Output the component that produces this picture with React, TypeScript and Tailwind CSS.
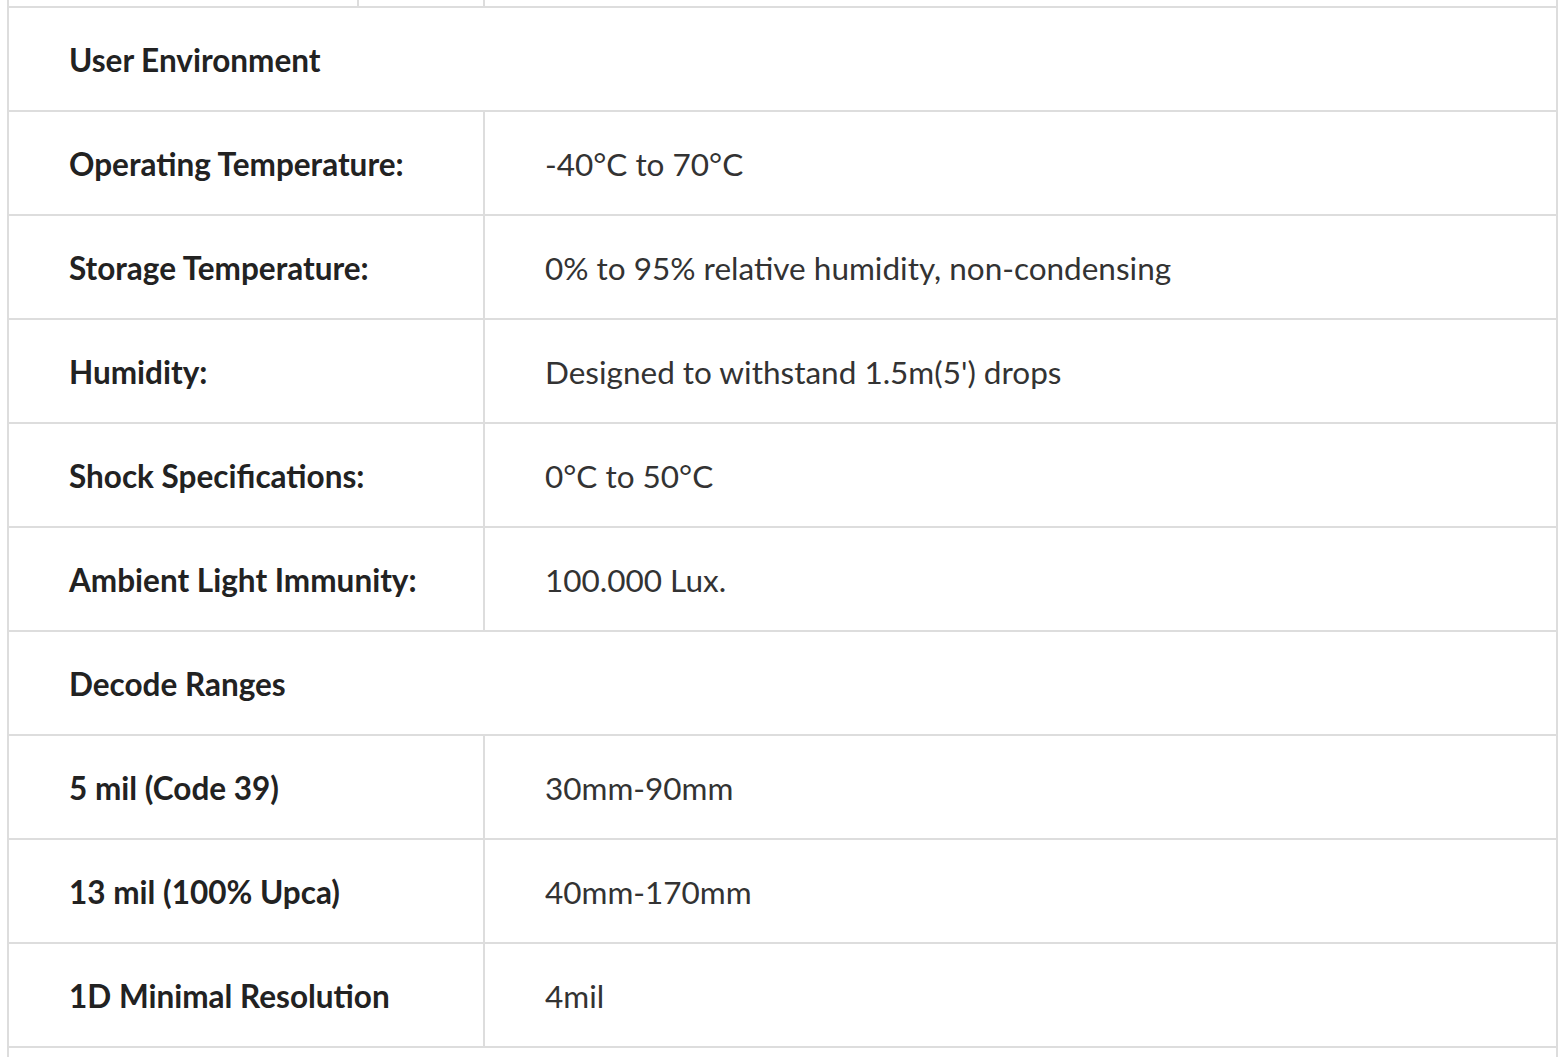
const rows: { label: string; value?: string }[] = [
  { label: 'User Environment' },
  { label: 'Operating Temperature:', value: '-40°C to 70°C' },
  { label: 'Storage Temperature:', value: '0% to 95% relative humidity, non-condensing' },
  { label: 'Humidity:', value: "Designed to withstand 1.5m(5') drops" },
  { label: 'Shock Specifications:', value: '0°C to 50°C' },
  { label: 'Ambient Light Immunity:', value: '100.000 Lux.' },
  { label: 'Decode Ranges' },
  { label: '5 mil (Code 39)', value: '30mm-90mm' },
  { label: '13 mil (100% Upca)', value: '40mm-170mm' },
  { label: '1D Minimal Resolution', value: '4mil' },
];

export default function App() {
  return (
    <div className="min-h-screen bg-white pl-[7px] text-[31.5px] text-[#222]" style={{ fontFamily: 'Lato, "Open Sans", sans-serif' }}>
      <div className="w-[1551px] border-x-2 border-[#ddd]">
        {/* tail of the previous table */}
        <div className="flex h-[6px]">
          <div className="w-[350px] border-r-2 border-[#ddd]" />
          <div className="w-[126px] border-r-2 border-[#ddd]" />
        </div>

        {rows.map((r) =>
          r.value === undefined ? (
            <div key={r.label} className="flex h-[104px] items-center border-t-2 border-[#ddd] px-[60px] pt-[4px] font-bold">
              {r.label}
            </div>
          ) : (
            <div key={r.label} className="flex h-[104px] border-t-2 border-[#ddd]">
              <div className="flex w-[474px] items-center px-[60px] pt-[4px] font-bold">{r.label}</div>
              <div className="flex flex-1 items-center border-l-2 border-[#ddd] px-[60px] pt-[4px] text-[#333]">{r.value}</div>
            </div>
          )
        )}

        <div className="h-[20px] border-t-2 border-[#ddd]" />
      </div>
    </div>
  );
}
